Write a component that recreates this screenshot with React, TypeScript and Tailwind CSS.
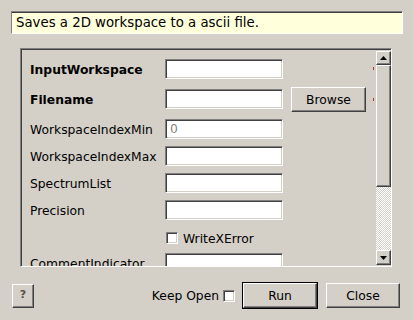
import React from 'react';

const sunken =
  'border border-t-[#808080] border-l-[#808080] border-b-white border-r-white shadow-[inset_1px_1px_0_#404040,inset_-1px_-1px_0_#d4d0c8]';
const raised =
  'border border-t-white border-l-white border-b-[#404040] border-r-[#404040] shadow-[inset_-1px_-1px_0_#808080]';

function TextBox({ placeholder }: { placeholder?: string }) {
  return (
    <div className={`h-[20px] w-[118px] bg-white ${sunken} flex items-center pl-[4px] pt-[1px] text-[#808080]`}>
      {placeholder}
    </div>
  );
}

function Check() {
  return <div className={`h-[12px] w-[12px] bg-white ${sunken} shrink-0`} />;
}

function Row({
  label,
  bold,
  h,
  placeholder,
  browse,
}: {
  label: string;
  bold?: boolean;
  h: string;
  placeholder?: string;
  browse?: boolean;
}) {
  return (
    <div className={`flex items-start shrink-0 ${h}`}>
      <div className={`w-[135px] h-[20px] pt-[2px] flex items-center whitespace-nowrap ${bold ? 'font-bold' : ''}`}>
        {label}
      </div>
      <TextBox placeholder={placeholder} />
      {browse && (
        <button className={`ml-[8px] -mt-[2px] h-[25px] w-[75px] pt-[1px] bg-[#d4d0c8] ${raised} flex items-center justify-center`}>
          Browse
        </button>
      )}
    </div>
  );
}

function Arrow({ down }: { down?: boolean }) {
  return (
    <svg width="7" height="4" viewBox="0 0 7 4">
      <polygon points={down ? '0,0 7,0 3.5,4' : '3.5,0 7,4 0,4'} fill="#000" />
    </svg>
  );
}

export default function App() {
  return (
    <div className="w-[413px] h-[320px] bg-[#d4d0c8] font-['DejaVu_Sans',sans-serif] text-[12.3px] text-black overflow-hidden">
      {/* description */}
      <div className="pt-[11px] pl-[11px]">
        <div className="h-[23px] w-[392px] bg-[#ffffdc] border border-t-[#808080] border-l-[#808080] border-b-white border-r-white shadow-[inset_0_1px_0_#404040] flex items-center pl-[4px] pt-[1px] text-[13.3px]">
          Saves a 2D workspace to a ascii file.
        </div>
      </div>

      {/* property scroll area */}
      <div className={`relative mt-[14px] ml-[20px] w-[372px] h-[219px] ${sunken} flex`}>
        <div className="flex-1 overflow-hidden flex flex-col pt-[10px] pl-[9px]">
          <Row label="InputWorkspace" bold h="h-[30px]" />
          <Row label="Filename" bold h="h-[30px]" browse />
          <Row label="WorkspaceIndexMin" h="h-[27px]" placeholder="0" />
          <Row label="WorkspaceIndexMax" h="h-[27px]" />
          <Row label="SpectrumList" h="h-[27px]" />
          <Row label="Precision" h="h-[27px]" />
          <div className="h-[26px] shrink-0 flex items-start pt-[5px] pl-[136px]">
            <Check />
            <span className="ml-[5px] leading-[12px] pt-[1px]">WriteXError</span>
          </div>
          <Row label="CommentIndicator" h="h-[27px]" />
        </div>

        {/* validator marks */}
        <span className="absolute left-[352px] top-[18px] w-[1px] h-[3px] bg-[#c03030]" />
        <span className="absolute left-[352px] top-[49px] w-[1px] h-[3px] bg-[#c03030]" />

        {/* scrollbar */}
        <div className="w-[15px] mt-[2px] mb-[1px] flex flex-col">
          <div className={`h-[14px] bg-[#d4d0c8] ${raised} flex items-center justify-center`}>
            <Arrow />
          </div>
          <div className={`h-[122px] bg-[#d4d0c8] ${raised}`} />
          <div className="flex-1 bg-[repeating-conic-gradient(#ffffff_0_25%,#d4d0c8_0_50%)] bg-[length:2px_2px]" />
          <div className={`h-[15px] bg-[#d4d0c8] ${raised} flex items-center justify-center`}>
            <Arrow down />
          </div>
        </div>
      </div>

      {/* bottom buttons */}
      <div className="mt-[15px] flex items-center justify-between pl-[12px] pr-[13px]">
        <button className={`h-[24px] w-[22px] bg-[#d4d0c8] ${raised} flex items-center justify-center text-[11px] font-bold text-[#505050]`}>
          ?
        </button>
        <div className="flex items-center">
          <span className="pt-[1px]">Keep Open</span>
          <div className="ml-[4px]">
            <Check />
          </div>
          <div className="ml-[7px] border border-black">
            <button className={`h-[25px] w-[74px] pt-[1px] bg-[#d4d0c8] ${raised} flex items-center justify-center`}>
              Run
            </button>
          </div>
          <button className={`ml-[8px] h-[25px] w-[74px] pt-[1px] bg-[#d4d0c8] ${raised} flex items-center justify-center`}>
            Close
          </button>
        </div>
      </div>
    </div>
  );
}
